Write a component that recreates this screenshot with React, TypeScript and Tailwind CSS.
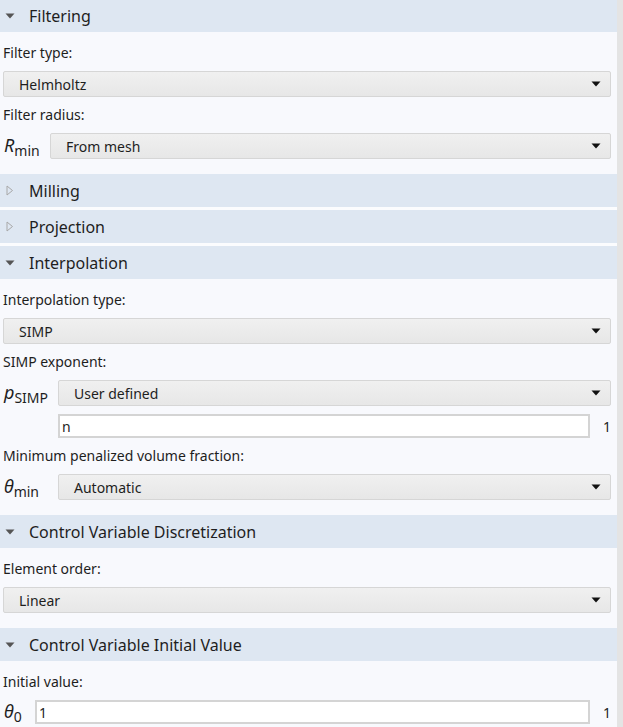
import type { ReactNode } from 'react'

/* ---------- small pieces ---------- */
function Header({ title, open = true, h = 'h-[33px]' }: { title: string; open?: boolean; h?: string }) {
  return (
    <div className={`flex ${h} items-center bg-[#dee7f2] pl-[5px] text-[16px] text-[#1e1e1e]`}>
      <span className="flex w-[24px] items-center">
        {open ? (
          <svg width="10" height="6" viewBox="0 0 10 6">
            <polygon points="0.5,0.5 9.5,0.5 5,5.5" fill="#555" />
          </svg>
        ) : (
          <svg width="8" height="11" viewBox="0 0 8 11" className="ml-[1px]">
            <polygon points="1,1 6.5,5.5 1,10" fill="none" stroke="#a8a8a8" strokeWidth="1" />
          </svg>
        )}
      </span>
      <span>{title}</span>
    </div>
  )
}

function Label({ children }: { children: ReactNode }) {
  return <div className="h-[20px] pl-[3px] text-[14px] leading-[20px] text-[#1e1e1e]">{children}</div>
}

function Select({ value }: { value: string }) {
  return (
    <div className="flex h-[26px] flex-1 items-center justify-between rounded-[2px] border border-[#d6d6d6] bg-gradient-to-b from-[#f0f0f0] to-[#e7e7e7] pl-[15px] pr-[9px] text-[14px] text-[#1e1e1e]">
      <span>{value}</span>
      <svg width="10" height="6" viewBox="0 0 10 6">
        <polygon points="0.5,0.5 9.5,0.5 5,5.5" fill="#111" />
      </svg>
    </div>
  )
}

function Input({ value }: { value: string }) {
  return (
    <div className="flex h-[24px] flex-1 items-center border-2 border-[#d4d4d4] bg-white pl-[2px] text-[14px] text-[#1e1e1e]">
      {value}
    </div>
  )
}

function Sym({ base, sub, w }: { base: string; sub: string; w: string }) {
  return (
    <div className={`${w} shrink-0 pl-[4px] leading-[20px] text-[#1e1e1e]`}>
      <span className="text-[18px] italic">{base}</span>
      <span className="relative top-[4px] text-[14px]">{sub}</span>
    </div>
  )
}

function Body({ children }: { children: ReactNode }) {
  return <div className="flex flex-col gap-[8px] pb-[15px] pt-[11px]">{children}</div>
}

/* ---------- page ---------- */
export default function App() {
  return (
    <div className="flex h-[727px] w-[623px] items-start overflow-hidden bg-[#f8f9fd] font-['Noto_Sans','Open_Sans',sans-serif]">
      <div className="w-[617px]">
        <Header title="Filtering" h="h-[32px]" />
        <Body>
          <Label>Filter type:</Label>
          <div className="flex pl-[3px] pr-[6px]">
            <Select value="Helmholtz" />
          </div>
          <Label>Filter radius:</Label>
          <div className="flex items-center pr-[6px]">
            <Sym base="R" sub="min" w="w-[50px]" />
            <Select value="From mesh" />
          </div>
        </Body>

        <Header title="Milling" open={false} />
        <div className="h-[3px] bg-[#fbfcfe]" />
        <Header title="Projection" open={false} />
        <div className="h-[3px] bg-[#fbfcfe]" />
        <Header title="Interpolation" />
        <Body>
          <Label>Interpolation type:</Label>
          <div className="flex pl-[3px] pr-[6px]">
            <Select value="SIMP" />
          </div>
          <Label>SIMP exponent:</Label>
          <div className="flex items-center pr-[6px]">
            <Sym base="p" sub="SIMP" w="w-[58px]" />
            <Select value="User defined" />
          </div>
          <div className="flex items-center pl-[58px]">
            <Input value="n" />
            <span className="w-[27px] pl-[13px] text-[14px] text-[#1e1e1e]">1</span>
          </div>
          <Label>Minimum penalized volume fraction:</Label>
          <div className="flex items-center pr-[6px]">
            <Sym base="θ" sub="min" w="w-[58px]" />
            <Select value="Automatic" />
          </div>
        </Body>

        <Header title="Control Variable Discretization" />
        <Body>
          <Label>Element order:</Label>
          <div className="flex pl-[3px] pr-[6px]">
            <Select value="Linear" />
          </div>
        </Body>

        <Header title="Control Variable Initial Value" />
        <Body>
          <Label>Initial value:</Label>
          <div className="flex items-center">
            <Sym base="θ" sub="0" w="w-[35px]" />
            <Input value="1" />
            <span className="w-[27px] pl-[13px] text-[14px] text-[#1e1e1e]">1</span>
          </div>
        </Body>
      </div>
      <div className="h-full w-[6px] bg-[#e4e4e4]" />
    </div>
  )
}
